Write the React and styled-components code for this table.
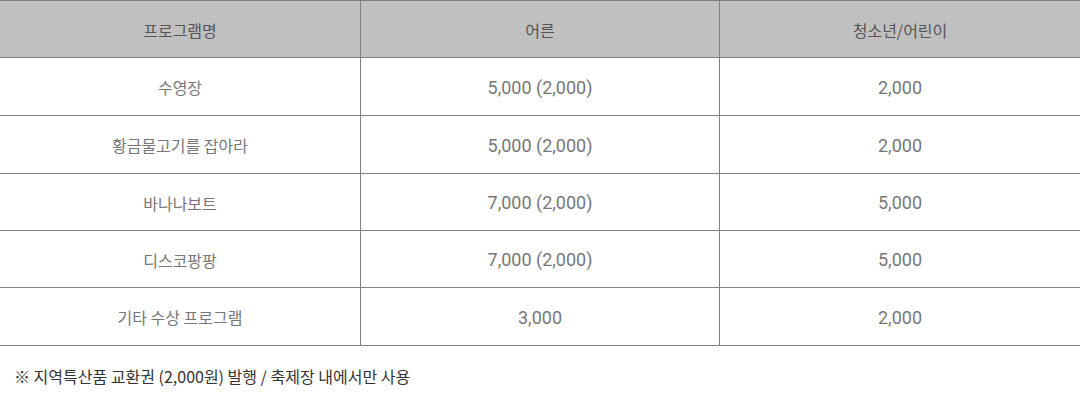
import React from 'react'
import styled, { createGlobalStyle } from 'styled-components'

const GlobalStyle = createGlobalStyle`
*{
  margin: 0;
  padding: 0;
  box-sizing: border-box;
}
body{
  background: #fff;
  font-family: 'Noto Sans CJK KR', sans-serif;
}
`

const Wrap = styled.div`
width: 1080px;
`

const Table = styled.div`
display: grid;
grid-template-columns: 360px 359px 361px;
border-top: 1px solid #808080;
border-right: 1px solid #808080;
`

const Cell = styled.div`
height: ${p => p.h}px;
display: flex;
align-items: center;
justify-content: center;
font-family: ${p => (p.num ? "Roboto, 'Noto Sans CJK KR', sans-serif" : "'Noto Sans CJK KR', sans-serif")};
font-size: ${p => (p.num ? '18px' : '16px')};
padding-top: 1px;
color: ${p => (p.head ? '#555' : '#777')};
background: ${p => (p.head ? '#c0c0c0' : '#fff')};
border-bottom: 1px solid #808080;
border-left: ${p => (p.first ? 'none' : '1px solid #808080')};
`

const Note = styled.p`
margin-top: 18px;
padding-left: 14px;
font-size: 16px;
line-height: 24px;
color: #333;
`

const rows = [
  ['수영장', '5,000 (2,000)', '2,000'],
  ['황금물고기를 잡아라', '5,000 (2,000)', '2,000'],
  ['바나나보트', '7,000 (2,000)', '5,000'],
  ['디스코팡팡', '7,000 (2,000)', '5,000'],
  ['기타 수상 프로그램', '3,000', '2,000'],
]

const heights = [58, 58, 57, 57, 58]

export default function App() {
  return (
    <Wrap>
      <GlobalStyle />
      <Table>
        {['프로그램명', '어른', '청소년/어린이'].map((t, i) => (
          <Cell key={t} head h={57} first={i === 0}>{t}</Cell>
        ))}
        {rows.map((r, ri) =>
          r.map((t, i) => (
            <Cell key={ri + '-' + i} h={heights[ri]} first={i === 0} num={i > 0}>{t}</Cell>
          ))
        )}
      </Table>
      <Note>※ 지역특산품 교환권 (2,000원) 발행 / 축제장 내에서만 사용</Note>
    </Wrap>
  )
}
